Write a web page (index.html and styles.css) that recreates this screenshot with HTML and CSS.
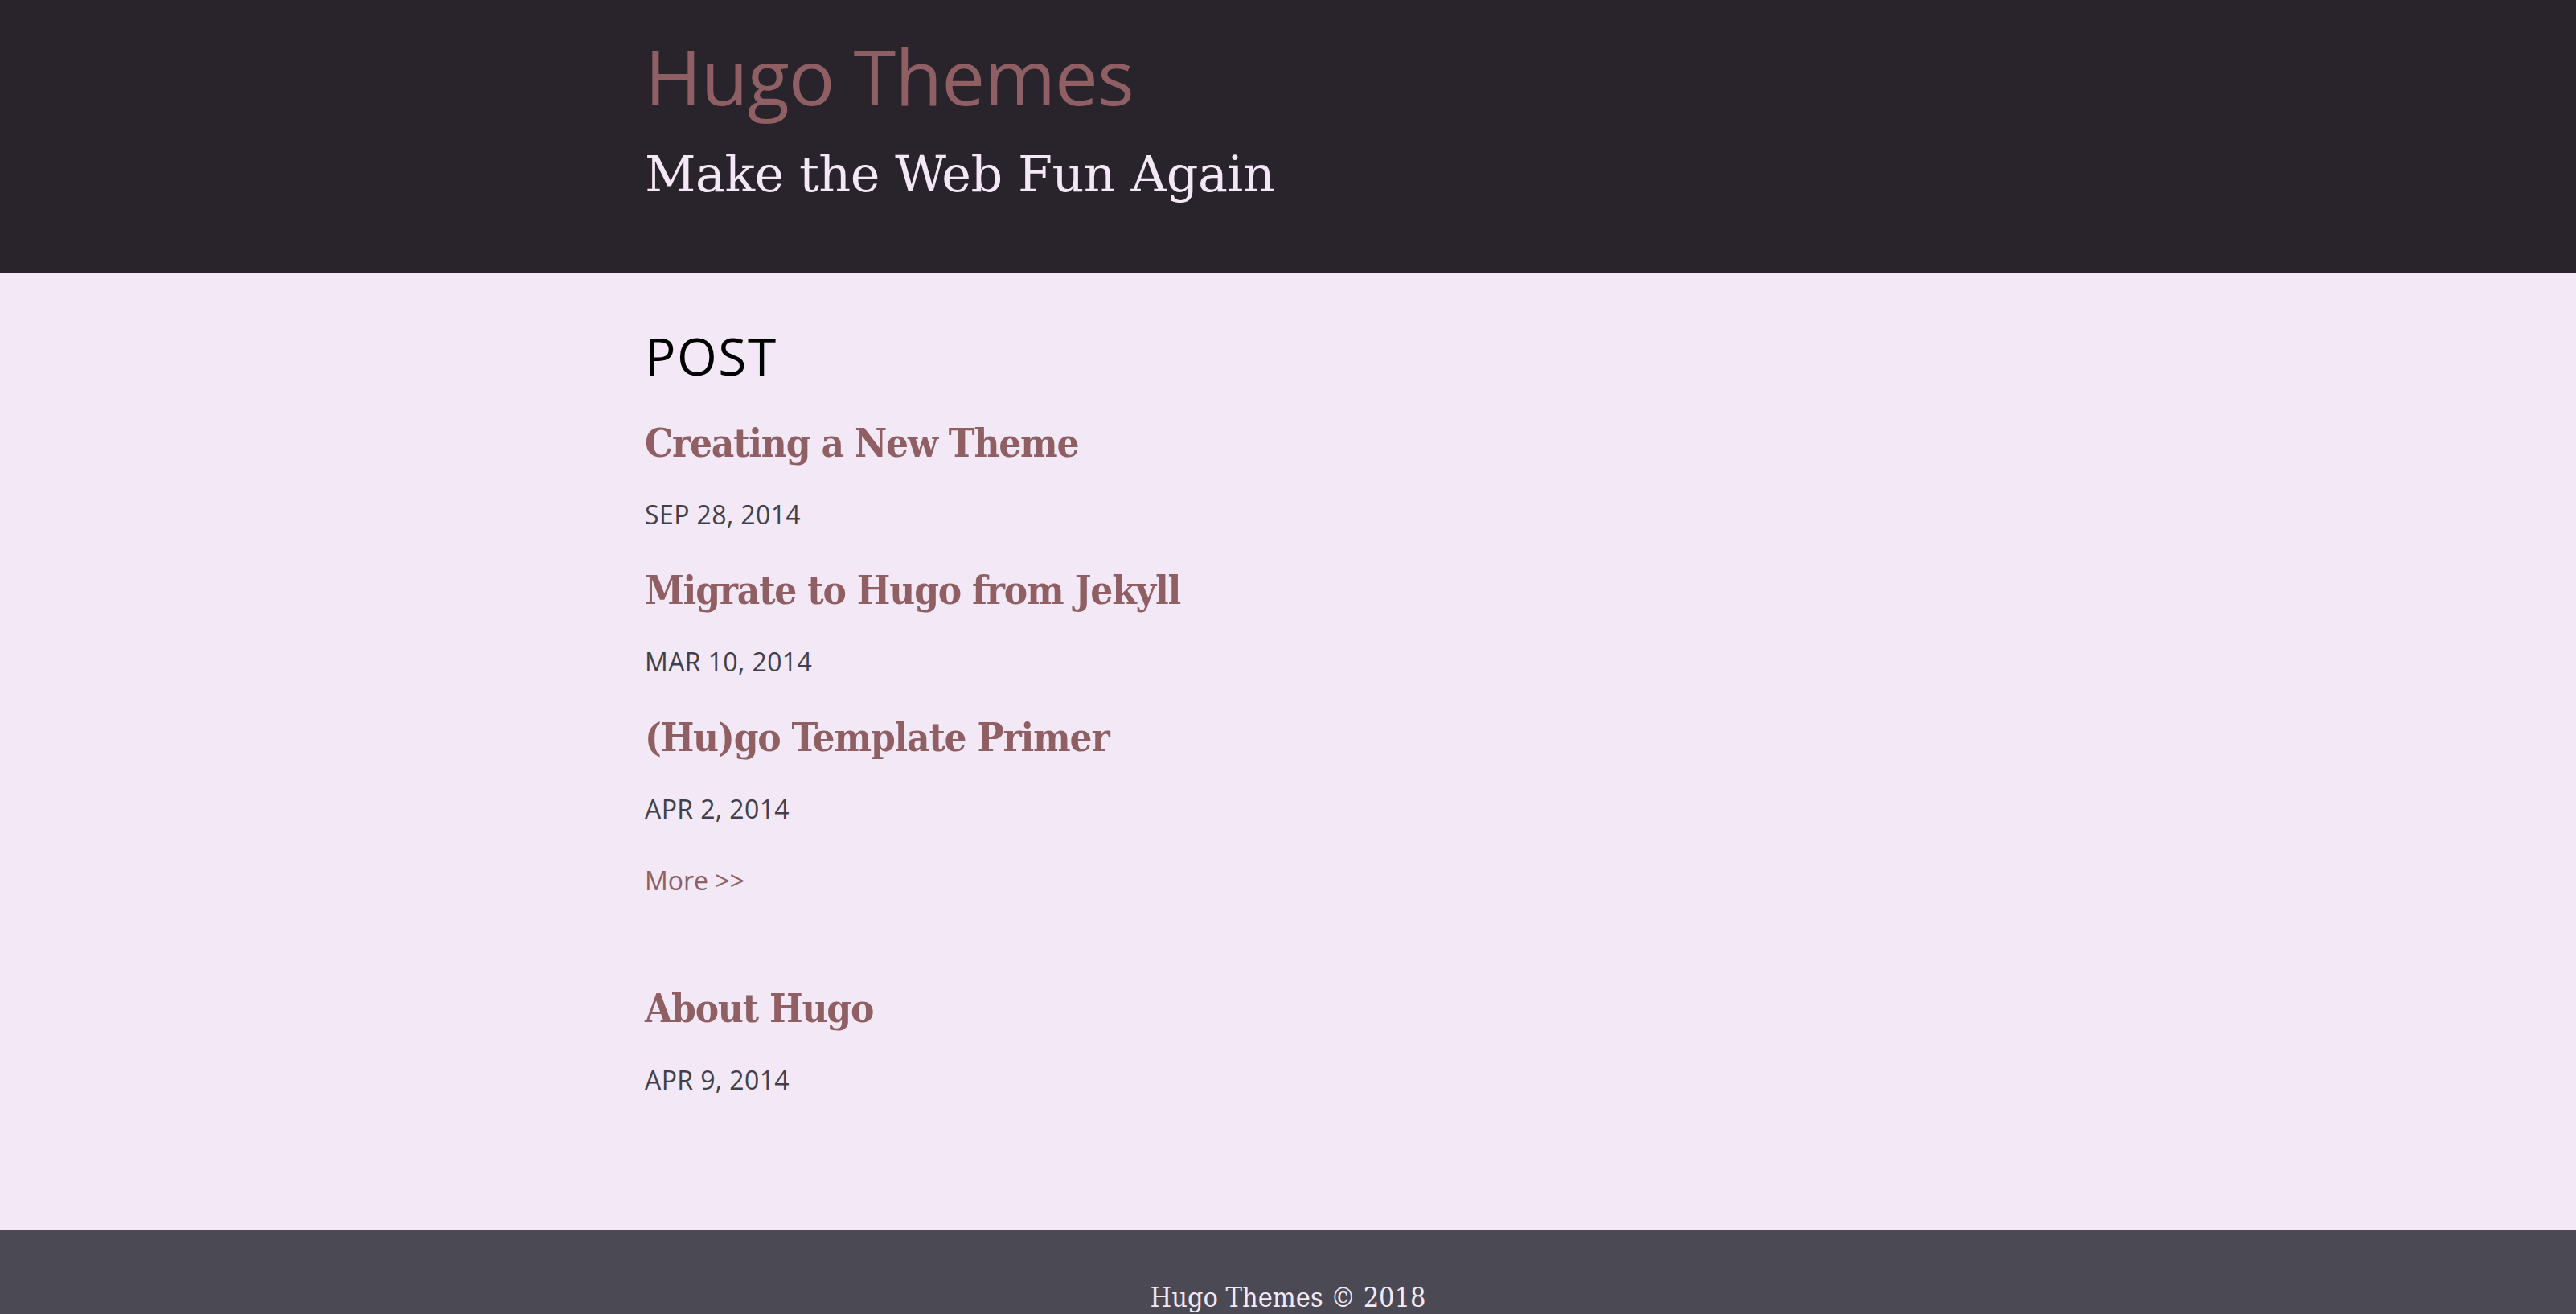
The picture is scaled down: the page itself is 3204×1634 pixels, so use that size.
FILE: index.html
```html
<!DOCTYPE html>
<html lang="en">
<head>
  <meta charset="UTF-8">
  <meta name="viewport" content="width=device-width, initial-scale=1.0">
  <title>Hugo Themes</title>
  <link rel="stylesheet" href="styles.css">
</head>
<body>
  <header class="site-header">
    <div class="container">
      <h1 class="site-title"><a href="#">Hugo Themes</a></h1>
      <p class="site-tagline">Make the Web Fun Again</p>
    </div>
  </header>

  <main class="site-main">
    <div class="container">
      <section class="section">
        <h2 class="section-title">POST</h2>

        <article class="entry">
          <h3 class="entry-title"><a href="#">Creating a New Theme</a></h3>
          <div class="entry-date">SEP 28, 2014</div>
        </article>

        <article class="entry">
          <h3 class="entry-title"><a href="#">Migrate to Hugo from Jekyll</a></h3>
          <div class="entry-date">MAR 10, 2014</div>
        </article>

        <article class="entry">
          <h3 class="entry-title"><a href="#">(Hu)go Template Primer</a></h3>
          <div class="entry-date">APR 2, 2014</div>
        </article>

        <a class="more" href="#">More &gt;&gt;</a>
      </section>

      <section class="section section-pages">
        <article class="entry">
          <h3 class="entry-title"><a href="#">About Hugo</a></h3>
          <div class="entry-date">APR 9, 2014</div>
        </article>
      </section>
    </div>
  </main>

  <footer class="site-footer">
    <p>Hugo Themes &copy; 2018</p>
  </footer>
</body>
</html>
```

FILE: styles.css
```css
body {
  margin: 0;
  background: #f3e8f5;
  font-family: 'Open Sans', sans-serif;
  font-size: 32px;
  line-height: 1.5;
  color: #41404a;
}
a {
  color: #8f5f63;
  text-decoration: none;
}
.container {
  max-width: 1600px;
  margin: 0 auto;
}

/* header */
.site-header {
  background: #29232b;
  padding: 36px 0 84px;
}
.site-title {
  margin: 0;
  font-size: 96px;
  font-weight: 400;
  line-height: 1.2;
  letter-spacing: -1px;
}
.site-tagline {
  margin: 29px 0 0;
  font-family: 'DejaVu Serif', serif;
  font-size: 62px;
  line-height: 1.2;
  letter-spacing: -0.5px;
  color: #f3e8f5;
}

/* posts */
.site-main {
  padding: 66px 0 162px;
}
.section-title {
  margin: 0;
  font-size: 64px;
  font-weight: 400;
  line-height: 1.2;
  letter-spacing: 1.5px;
  color: #000;
}
.entry-title {
  margin: 41px 0 0;
  font-family: 'DejaVu Serif Condensed', 'DejaVu Serif', serif;
  font-stretch: condensed;
  font-size: 49px;
  font-weight: 700;
  line-height: 1.2;
  letter-spacing: -1.2px;
}
.entry-date {
  margin-top: 35px;
  letter-spacing: 0.4px;
}
.more {
  display: block;
  margin-top: 41px;
}
.section-pages {
  padding-top: 65px;
}

/* footer */
.site-footer {
  background: #4b4a54;
  padding: 64px 0;
  text-align: center;
}
.site-footer p {
  margin: 0;
  font-family: 'DejaVu Serif Condensed', 'DejaVu Serif', serif;
  font-stretch: condensed;
  font-size: 34px;
  line-height: 1.2;
  color: #f3e8f5;
}
```
